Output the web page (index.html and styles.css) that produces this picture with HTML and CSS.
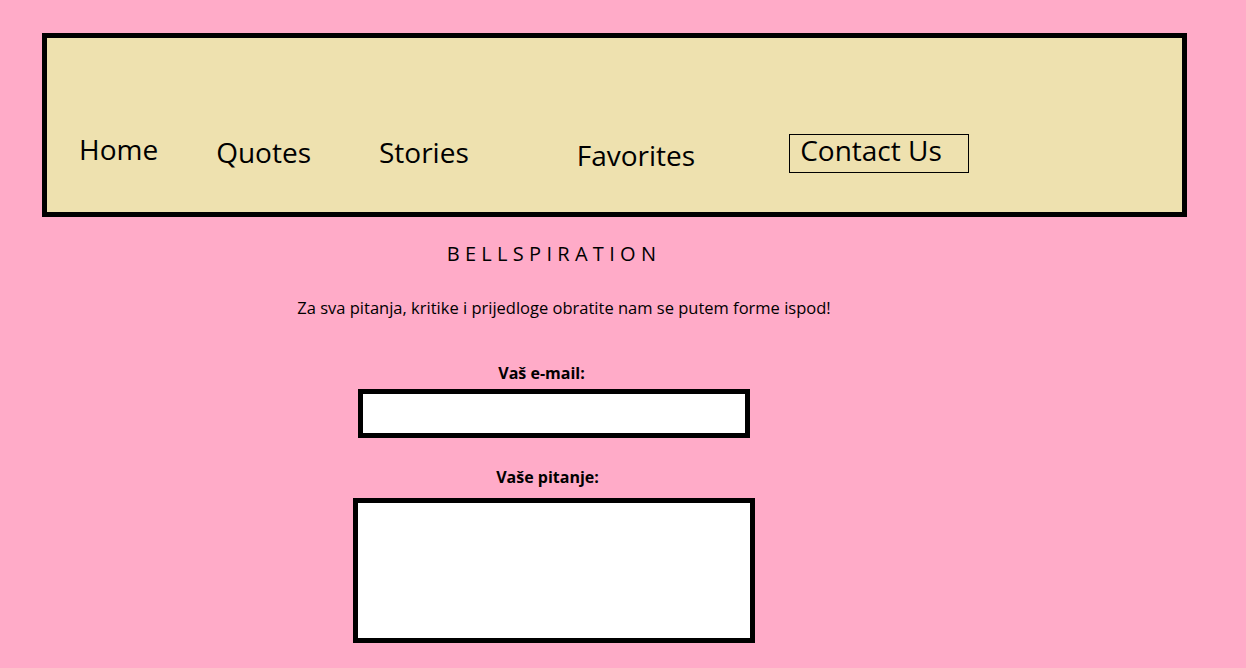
FILE: index.html
```html
<!DOCTYPE html>
<html lang="hr">
<head>
<meta charset="utf-8">
<title>Bellspiration - Contact Us</title>
<link rel="stylesheet" href="styles.css">
</head>
<body>
<header class="header">
  <nav class="nav">
    <a class="nav-link nav-home" href="#">Home</a>
    <a class="nav-link nav-quotes" href="#">Quotes</a>
    <a class="nav-link nav-stories" href="#">Stories</a>
    <a class="nav-link nav-favorites" href="#">Favorites</a>
    <a class="nav-link nav-contact" href="#">Contact Us</a>
  </nav>
</header>
<main class="main">
  <h1 class="title">BELLSPIRATION</h1>
  <p class="intro">Za sva pitanja, kritike i prijedloge obratite nam se putem forme ispod!</p>
  <form class="form">
    <label class="label label-email" for="email">Vaš e-mail:</label>
    <input class="input" id="email" type="email">
    <label class="label label-question" for="question">Vaše pitanje:</label>
    <textarea class="textarea" id="question"></textarea>
  </form>
</main>
</body>
</html>
```
FILE: styles.css
```css
* { box-sizing: border-box; }
html, body {
  margin: 0;
  padding: 0;
  background: #ffabc8;
  font-family: "Open Sans", "Liberation Sans", sans-serif;
  color: #000;
  overflow: hidden;
}
body { height: 668px; }

.header {
  margin: 33px 0 0 42px;
  width: 1145px;
  height: 184px;
  background: #eee1af;
  border: 5px solid #000;
}
.nav {
  display: flex;
  align-items: flex-start;
  padding-left: 32px;
}
.nav-link {
  color: #000;
  text-decoration: none;
  font-size: 28px;
  line-height: 38px;
}
.nav-home { margin-top: 92px; }
.nav-quotes { margin-top: 95px; margin-left: 58px; }
.nav-stories { margin-top: 95px; margin-left: 68px; }
.nav-favorites { margin-top: 98px; margin-left: 108px; }
.nav-contact {
  margin-top: 96px;
  margin-left: 94px;
  width: 180px;
  height: 39px;
  border: 1px solid #000;
  padding: 0 0 0 10px;
  line-height: 28px;
  padding-top: 1px;
}

.main {
  width: 1108px;
  display: flex;
  flex-direction: column;
  align-items: center;
}
.title {
  margin: 23px 0 0 0;
  font-size: 20px;
  font-weight: 400;
  letter-spacing: 5.3px;
  line-height: 27px;
}
.intro {
  margin: 30px 0 0 20px;
  font-size: 16.5px;
  line-height: 22px;
}
.form {
  display: flex;
  flex-direction: column;
  align-items: center;
  margin-top: 43px;
}
.label {
  font-weight: 700;
  font-size: 16px;
  line-height: 22px;
}
.label-email { margin-right: 25px; }
.input {
  margin-top: 5px;
  width: 392px;
  height: 49px;
  border: 5px solid #000;
  background: #fff;
  border-radius: 0;
  outline: none;
}
.label-question { margin-top: 28px; margin-right: 13px; }
.textarea {
  margin-top: 10px;
  width: 402px;
  height: 145px;
  border: 5px solid #000;
  background: #fff;
  resize: none;
  border-radius: 0;
  outline: none;
}
```
